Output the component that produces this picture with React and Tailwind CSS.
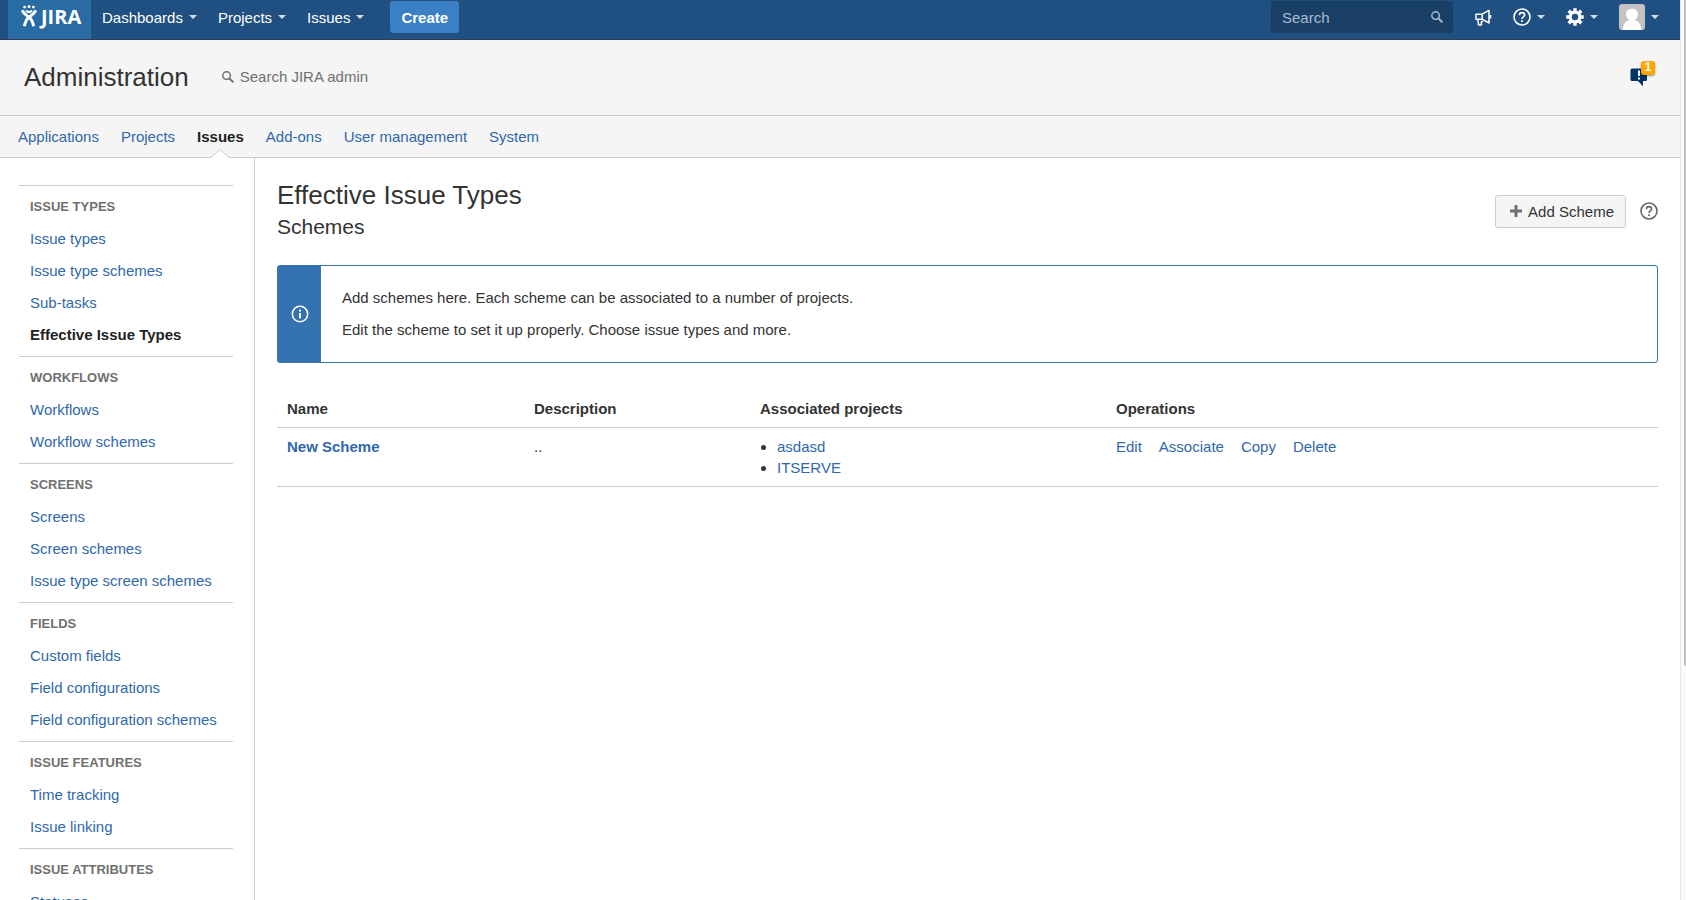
import { useState } from 'react';

const adminTabs = ['Applications', 'Projects', 'Issues', 'Add-ons', 'User management', 'System'];

const sidebarSections = [
  { title: 'Issue types', items: ['Issue types', 'Issue type schemes', 'Sub-tasks', 'Effective Issue Types'] },
  { title: 'Workflows', items: ['Workflows', 'Workflow schemes'] },
  { title: 'Screens', items: ['Screens', 'Screen schemes', 'Issue type screen schemes'] },
  { title: 'Fields', items: ['Custom fields', 'Field configurations', 'Field configuration schemes'] },
  { title: 'Issue features', items: ['Time tracking', 'Issue linking'] },
  { title: 'Issue attributes', items: ['Statuses'] },
];

const schemes = [
  { id: 1, name: 'New Scheme', description: '..', projects: ['asdasd', 'ITSERVE'] },
];

const operations = ['Edit', 'Associate', 'Copy', 'Delete'];

function Caret() {
  return (
    <svg className="w-2 h-1 shrink-0" viewBox="0 0 8 4" fill="#d5dfee">
      <path d="M0 0h8L4 4z" />
    </svg>
  );
}

function LogoFigure() {
  return (
    <svg className="w-4 h-[22px] shrink-0" viewBox="0 0 16 22" fill="none" stroke="#fff">
      <g fill="#fff" stroke="none">
        <circle cx="3.6" cy="2.1" r="1.4" />
        <circle cx="8" cy="1.5" r="1.5" />
        <circle cx="12.4" cy="2.1" r="1.4" />
      </g>
      <path d="M1.2 5.2C2.6 9 5.4 10 8 12.2C10.6 14.4 11.8 17 12.6 21.2" strokeWidth="3" />
      <path d="M14.8 5.2C13.4 9 10.6 10 8 12.2C5.4 14.4 4.2 17 3.4 21.2" strokeWidth="3" />
      <path d="M5.2 5.4C6 7.6 10 7.6 10.8 5.4" strokeWidth="2.2" />
    </svg>
  );
}

function SearchIcon({ className }) {
  return (
    <svg className={className} viewBox="0 0 12 12" fill="none" stroke="currentColor">
      <circle cx="4.6" cy="4.6" r="3.8" strokeWidth="1.5" />
      <path d="M7.4 7.4L11.3 11.3" strokeWidth="2" />
    </svg>
  );
}

function HelpIcon({ className }) {
  return (
    <svg className={className} viewBox="0 0 18 18" fill="none" stroke="currentColor" strokeWidth="1.6">
      <circle cx="9" cy="9" r="8" />
      <path d="M6.4 7.2C6.4 5.5 7.5 4.6 9 4.6C10.5 4.6 11.6 5.5 11.6 6.9C11.6 8.8 9 8.9 9 11" />
      <path d="M9 12.2V14" strokeWidth="1.8" />
    </svg>
  );
}

function MegaphoneIcon() {
  return (
    <svg className="w-[17px] h-[17px]" viewBox="0 0 17 17" fill="none" stroke="#fff" strokeWidth="1.5" strokeLinejoin="round">
      <path d="M1 5.2H7L14 1.4V14L7 10.2H1z" />
      <path d="M7.2 5.2V10.2" />
      <path d="M2.8 10.4L3.6 16H6.4V12.4H8" />
      <path d="M15.3 6V9.4" strokeWidth="2" />
    </svg>
  );
}

function GearIcon() {
  return (
    <svg className="w-[18px] h-[18px]" viewBox="0 0 18 18" fill="none" stroke="#fff">
      <circle cx="9" cy="9" r="4.8" strokeWidth="3.2" />
      <path
        d="M9 0.2V3.4M9 14.6V17.8M0.2 9H3.4M14.6 9H17.8M2.7 2.7L5 5M13 13L15.3 15.3M2.7 15.3L5 13M13 5L15.3 2.7"
        strokeWidth="3.4"
      />
    </svg>
  );
}

function Avatar() {
  return (
    <svg className="w-[26px] h-[26px] rounded-[3px]" viewBox="0 0 26 26">
      <rect width="26" height="26" fill="#c3c3c3" />
      <circle cx="13" cy="10.4" r="6" fill="#fff" />
      <path d="M3.4 26C4.2 19.5 7.6 15.6 13 15.6C18.4 15.6 21.8 19.5 22.6 26z" fill="#fff" />
    </svg>
  );
}

function TopBar() {
  return (
    <header className="flex h-10 items-start justify-between border-b border-[#2e3d54] bg-[#205081] pl-2 pr-[21px]">
      <div className="flex items-start">
        <a href="#" aria-label="JIRA home" className="flex h-[39px] w-[83px] items-start gap-1 bg-[#296ca3] pl-[13px] pt-[5px]">
          <LogoFigure />
          <span className="font-['Open_Sans',sans-serif] text-[20px] leading-[24px] font-bold text-white">JIRA</span>
        </a>
        <nav className="flex h-[34px] items-center gap-px pl-px">
          {['Dashboards', 'Projects', 'Issues'].map((label) => (
            <button key={label} type="button" className="flex items-center gap-1.5 px-2.5 text-white">
              {label}
              <Caret />
            </button>
          ))}
        </nav>
        <button type="button" className="mt-px ml-4 h-8 rounded-[3px] bg-[#3b7fc4] px-[11px] font-bold text-white">
          Create
        </button>
      </div>

      <div className="flex h-[34px] items-center">
        <label className="flex h-8 w-[182px] items-center rounded-[3px] bg-[#1a3f66] pl-[11px] pr-2.5 text-[#a9bbd0]">
          <input type="text" aria-label="Search" placeholder="Search" className="min-w-0 flex-1 bg-transparent outline-none placeholder:text-[#a9bbd0]" />
          <SearchIcon className="w-3 h-3 shrink-0" />
        </label>
        <button type="button" aria-label="Feedback" className="ml-[22px]">
          <MegaphoneIcon />
        </button>
        <button type="button" aria-label="Help" className="ml-[21px] flex items-center gap-1.5 text-white">
          <HelpIcon className="w-[18px] h-[18px]" />
          <Caret />
        </button>
        <button type="button" aria-label="Administration" className="ml-[21px] flex items-center gap-1.5">
          <GearIcon />
          <Caret />
        </button>
        <button type="button" aria-label="Profile" className="ml-[21px] flex items-center gap-1.5">
          <Avatar />
          <Caret />
        </button>
      </div>
    </header>
  );
}

function NotificationIcon() {
  return (
    <button type="button" aria-label="1 notification" className="relative h-[26px] w-[26px]">
      <svg className="w-[26px] h-[26px]" viewBox="0 0 26 26">
        <path d="M2 7.5H15.5a1.5 1.5 0 0 1 1.5 1.5V18.5a1.5 1.5 0 0 1-1.5 1.5H13V25.2L8 20H2A1.5 1.5 0 0 1 .5 18.5V9A1.5 1.5 0 0 1 2 7.5z" fill="#003366" />
        <path d="M9 9.5V15M9 16.4V18.4" stroke="#fff" strokeWidth="2" />
      </svg>
      <span className="absolute top-0 right-px h-[14px] w-[14px] rounded-[3px] bg-[#ffa500] text-center text-[12px] leading-[12px] font-bold text-white shadow-[0_1px_2px_rgba(0,0,0,0.4)]">
        1
      </span>
    </button>
  );
}

function AdminHeader({ tab, onTab }) {
  return (
    <div className="bg-[#f5f5f5]">
      <div className="flex h-[76px] items-center border-b border-[#ccc] pl-6 pr-6 pb-0.5">
        <h1 className="text-[26px] leading-8">Administration</h1>
        <label className="ml-[33px] flex items-center gap-1.5 text-[#707070]">
          <SearchIcon className="w-3 h-3" />
          <input type="text" aria-label="Search JIRA admin" placeholder="Search JIRA admin" className="w-40 bg-transparent outline-none placeholder:text-[#707070]" />
        </label>
        <div className="ml-auto mb-1.5 flex">
          <NotificationIcon />
        </div>
      </div>
      <nav className="flex h-[42px] gap-[22px] border-b border-[#ccc] pl-[18px]">
        {adminTabs.map((t) => (
          <a
            key={t}
            href="#"
            onClick={() => onTab(t)}
            className={`relative flex h-[42px] items-center pb-0.5 ${t === tab ? 'font-bold text-[#222]' : 'text-[#3068ab]'}`}
          >
            {t}
            {t === tab && (
              <svg className="absolute bottom-0 left-1/2 h-[9px] w-[18px] -translate-x-1/2" viewBox="0 0 18 9">
                <path d="M0 9L9 0.5L18 9z" fill="#fff" />
                <path d="M0 8.5L9 0.5L18 8.5" fill="none" stroke="#ccc" />
              </svg>
            )}
          </a>
        ))}
      </nav>
    </div>
  );
}

function Sidebar({ current }) {
  return (
    <aside className="w-[255px] shrink-0 border-r border-[#ccc] pl-[19px] pr-[21px] pt-[27px]">
      {sidebarSections.map((section) => (
        <section key={section.title} className="border-t border-[#ccc] px-[11px] pt-[11px] pb-[5px]">
          <h2 className="mb-1.5 text-[13px] leading-5 font-bold text-[#707070] uppercase">{section.title}</h2>
          <ul>
            {section.items.map((item) => (
              <li key={item} className="leading-8 whitespace-nowrap">
                <a href="#" className={item === current ? 'font-bold text-[#222]' : 'text-[#3068ab]'}>{item}</a>
              </li>
            ))}
          </ul>
        </section>
      ))}
    </aside>
  );
}

function InfoMessage() {
  return (
    <div className="mt-[22px] flex rounded-[3px] border border-[#3572b0] bg-[#3572b0]">
      <div className="flex w-[43px] shrink-0 items-center justify-center">
        <svg className="w-[18px] h-[18px]" viewBox="0 0 18 18" fill="none" stroke="#fff">
          <circle cx="9" cy="9" r="7.7" strokeWidth="1.6" />
          <path d="M9 4.8V6.6M9 8V13.2" strokeWidth="2" />
        </svg>
      </div>
      <div className="flex flex-1 flex-col gap-3 rounded-r-[2px] bg-white px-[21px] py-[22px] leading-5">
        <p>Add schemes here. Each scheme can be associated to a number of projects.</p>
        <p>Edit the scheme to set it up properly. Choose issue types and more.</p>
      </div>
    </div>
  );
}

function SchemesTable() {
  return (
    <table className="mt-[27px] w-full table-fixed text-left">
      <thead>
        <tr className="border-b border-[#ccc]">
          <th className="w-[247px] px-2.5 py-2 font-bold">Name</th>
          <th className="w-[226px] px-2.5 py-2 font-bold">Description</th>
          <th className="w-[356px] px-2.5 py-2 font-bold">Associated projects</th>
          <th className="px-2.5 py-2 font-bold">Operations</th>
        </tr>
      </thead>
      <tbody>
        {schemes.map((s) => (
          <tr key={s.id} className="border-b border-[#ccc] align-top">
            <td className="px-2.5 py-2 font-bold"><a href="#" className="text-[#3068ab]">{s.name}</a></td>
            <td className="px-2.5 py-2">{s.description}</td>
            <td className="px-2.5 py-2">
              <ul className="list-disc pl-[17px]">
                {s.projects.map((p) => (
                  <li key={p}><a href="#" className="text-[#3068ab]">{p}</a></li>
                ))}
              </ul>
            </td>
            <td className="px-2.5 py-2">
              <div className="flex gap-[17px]">
                {operations.map((op) => (
                  <a key={op} href="#" className="text-[#3068ab]">{op}</a>
                ))}
              </div>
            </td>
          </tr>
        ))}
      </tbody>
    </table>
  );
}

export default function App() {
  const [tab, setTab] = useState('Issues');

  return (
    <div className="flex h-screen bg-white font-['Liberation_Sans',Arial,sans-serif] text-[15px] leading-[21px] text-[#333]">
      <div className="flex min-w-0 flex-1 flex-col overflow-hidden">
        <TopBar />
        <AdminHeader tab={tab} onTab={setTab} />
        <div className="flex min-h-0 flex-1">
          <Sidebar current="Effective Issue Types" />
          <main className="min-w-0 flex-1 px-[22px] pt-[21px]">
            <div className="flex items-center justify-between">
              <div>
                <h1 className="text-[26px] leading-8">Effective Issue Types</h1>
                <h2 className="text-[21px] leading-8">Schemes</h2>
              </div>
              <div className="flex items-center gap-[14px]">
                <button type="button" className="flex h-[33px] items-center gap-1.5 rounded-[3px] border border-[#ccc] bg-[#f5f5f5] pl-[14px] pr-[11px]">
                  <svg className="w-3 h-3" viewBox="0 0 12 12" stroke="#707070" strokeWidth="3">
                    <path d="M6 0V12M0 6H12" />
                  </svg>
                  Add Scheme
                </button>
                <a href="#" aria-label="Help" className="text-[#666]">
                  <HelpIcon className="w-[18px] h-[18px]" />
                </a>
              </div>
            </div>
            <InfoMessage />
            <SchemesTable />
          </main>
        </div>
      </div>
      <div className="flex w-1.5 shrink-0 flex-col items-end border-l border-[#e7e7e7] bg-[#fafafa]">
        <div className="h-[74%] w-0.5 rounded-bl-[2px] bg-[#c1c1c1]"></div>
      </div>
    </div>
  );
}
